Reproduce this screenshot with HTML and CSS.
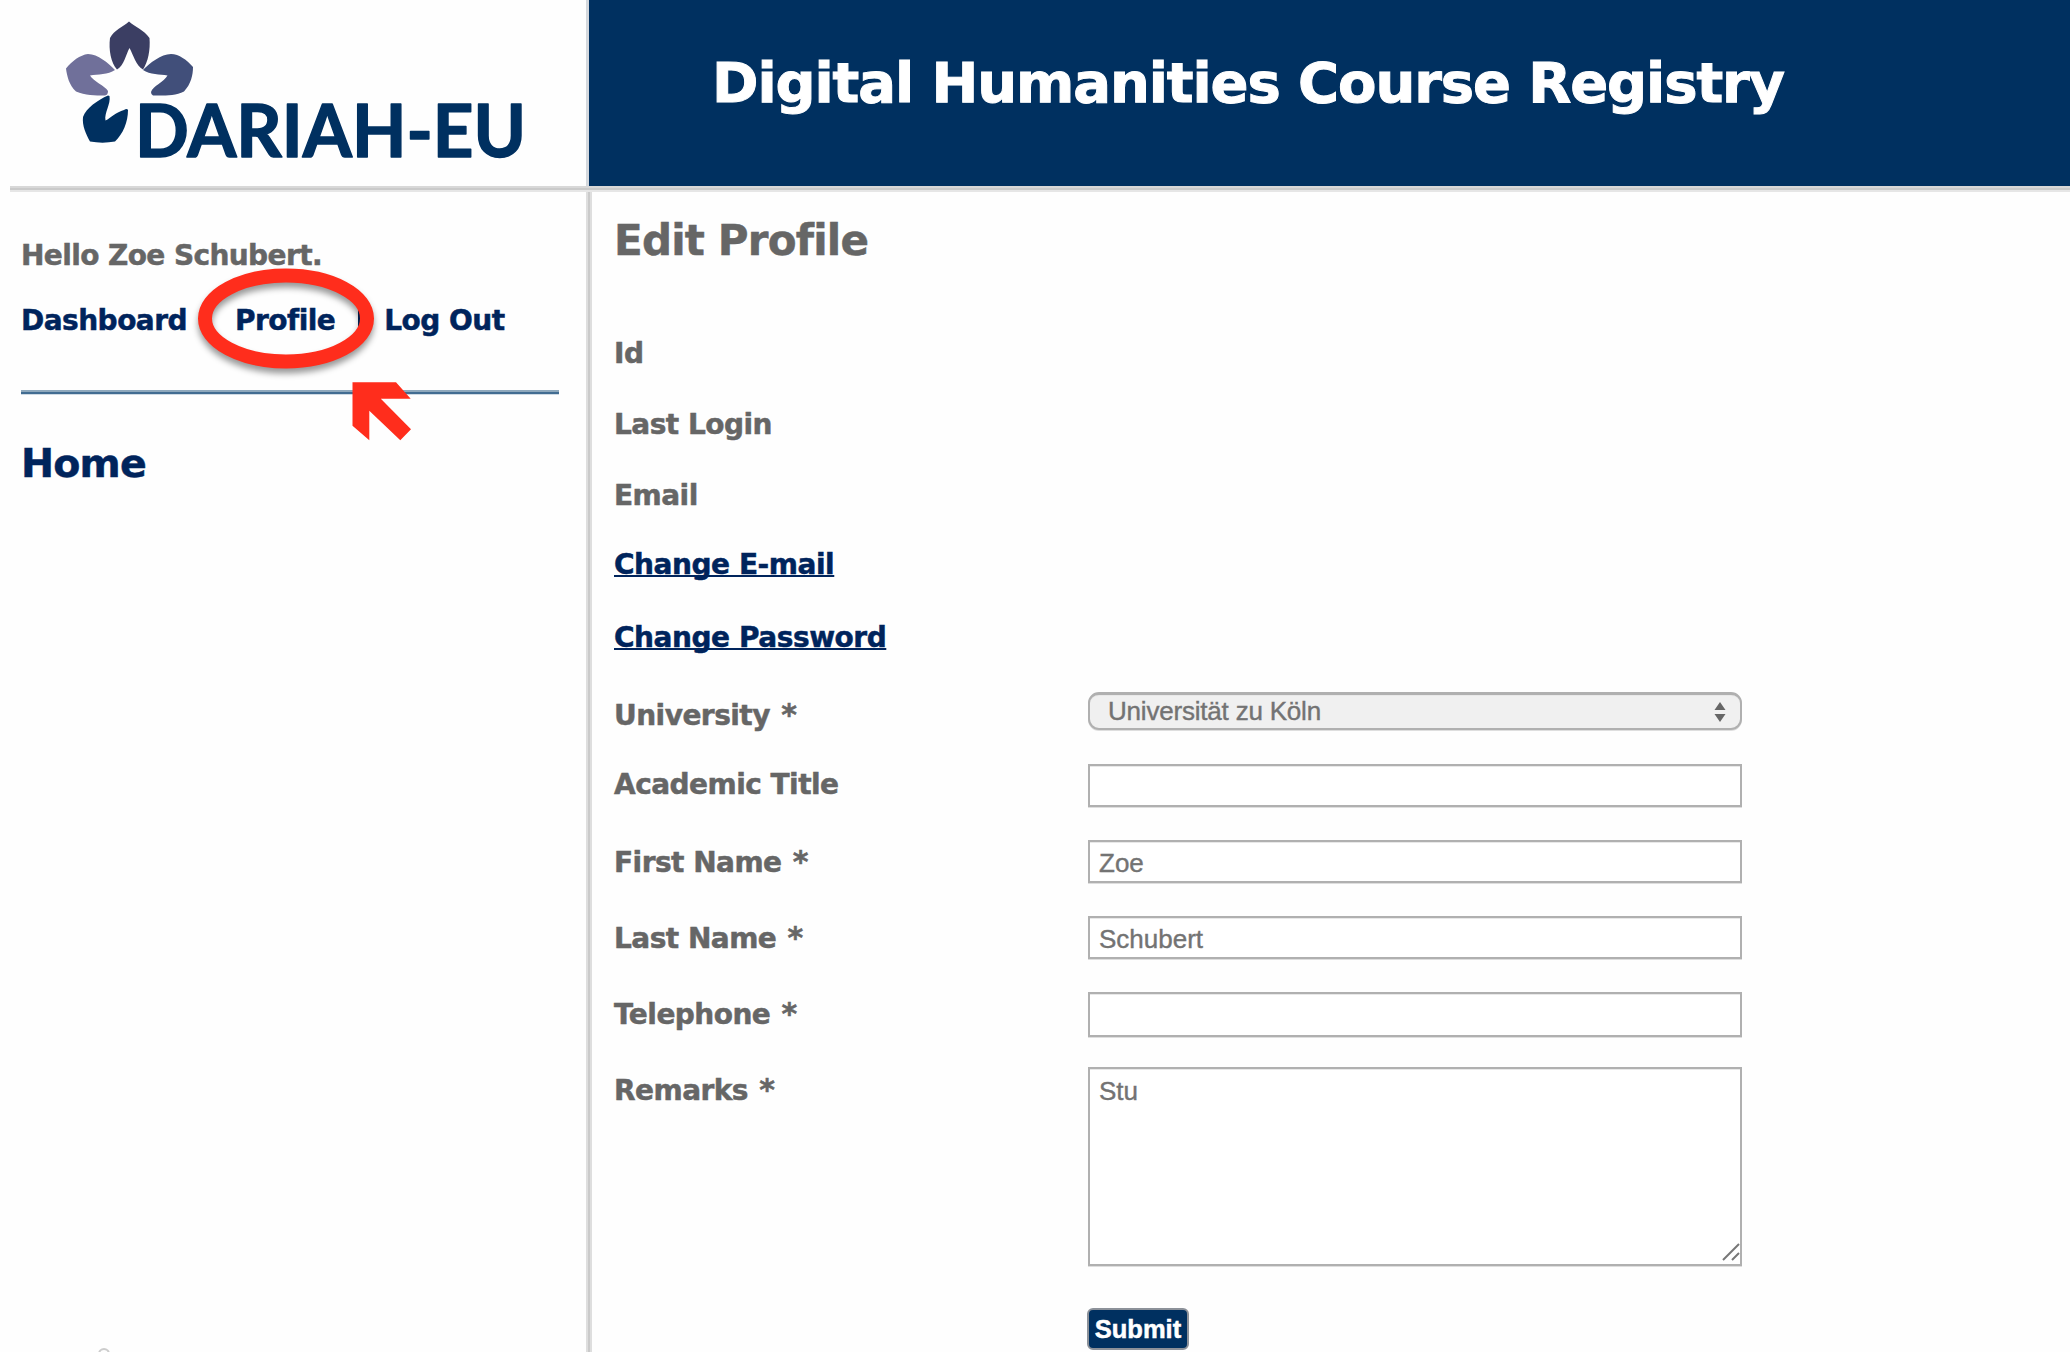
FILE: index.html
```html
<!DOCTYPE html>
<html lang="en">
<head>
<meta charset="utf-8">
<title>Digital Humanities Course Registry</title>
<link rel="stylesheet" href="styles.css">
</head>
<body>
<div class="page">
  <header class="header">
    <a class="brand">
      <svg class="logo" width="586" height="186" viewBox="0 0 586 186" role="img" aria-label="DARIAH-EU">
        <path fill="#3b3e63" d="M129 21.500C135 27 144 30 149.500 38C150.500 50 148 62 143 69.500C136 66 133 54 129.500 48C126 54 124 66 117 69.500C111 63 108.500 50 110 38C114 30 123 27 129 21.500Z"/>
        <path fill="#70709a" d="M66 68.500C72 61 80 55 88 54C98 54 108 63 115 70C108 75 98 74 90 75.500C93 81 105 86 108 91Q108 95 105 95.500C95 95.500 85 95.500 76 91.500C69 85 67 76 66 68.500Z"/>
        <path fill="#414f7a" d="M193 67C187 60 179 54 171 54C161 54 150 63 143 70C150 75 160 74 167.500 75.500C164 82 153 86 151 92Q151 95 153 95.500C164 95.500 175 96 184 91.500C191 84 193 75 193 67Z"/>
        <path fill="#003060" d="M108 95.500C98 100 86 108 83 117C82 126 86 134 90 141.500C98 143 107 143 115 141.500C123 134 128 122 128 110Q127 108 124 110C116 112 111 118 105.500 120.500C104 113 111 104 109.500 96Z"/>
        <text class="logo-text" x="135" y="157" textLength="391" lengthAdjust="spacingAndGlyphs">DARIAH-EU</text>
      </svg>
    </a>
    <div class="banner"><h1 class="site-title">Digital Humanities Course Registry</h1></div>
  </header>
  <div class="columns">
    <aside class="sidebar">
      <p class="greeting">Hello Zoe Schubert.</p>
      <nav class="user-nav">
        <a>Dashboard</a><i class="bar"></i><a>Profile</a><i class="bar"></i><a>Log Out</a>
        <svg class="marker" width="240" height="200" viewBox="190 255 240 200" aria-hidden="true">
          <ellipse class="ring" cx="286" cy="318.500" rx="81" ry="43"/>
          <path fill="#ff2d1c" d="M352.500 382.300H396L410.700 398.700H380.800L411 429.300L400.300 440.300L369.300 410.700V440.300L352.500 425.700Z"/>
        </svg>
      </nav>
      <hr class="divider">
      <a class="home">Home</a>
      <div class="sidebar-foot"><span class="dot"></span></div>
    </aside>
    <main class="content">
      <h2 class="heading">Edit Profile</h2>
      <div class="info">
        <span class="label">Id</span>
        <span class="label">Last Login</span>
        <span class="label">Email</span>
      </div>
      <div class="links">
        <a class="link">Change E-mail</a>
        <a class="link">Change Password</a>
      </div>
      <form class="form">
        <div class="row row-select">
          <label class="label">University <span class="req">*</span></label>
          <div class="control">
            <select class="field select"><option>Universität zu Köln</option></select>
            <svg class="arrows" width="12" height="24" viewBox="0 0 12 24"><path fill="#666" d="M0.500 10L6 2L11.500 10ZM0.500 14H11.500L6 22Z"/></svg>
          </div>
        </div>
        <div class="row row-title"><label class="label">Academic Title</label><input class="field" type="text"></div>
        <div class="row"><label class="label">First Name <span class="req">*</span></label><input class="field" type="text" value="Zoe"></div>
        <div class="row"><label class="label">Last Name <span class="req">*</span></label><input class="field" type="text" value="Schubert"></div>
        <div class="row row-phone"><label class="label">Telephone <span class="req">*</span></label><input class="field" type="text"></div>
        <div class="row row-remarks">
          <label class="label">Remarks <span class="req">*</span></label>
          <div class="control">
            <textarea class="field area">Stu</textarea>
            <svg class="grip" width="18" height="18" viewBox="0 0 18 18"><path stroke="#777" stroke-width="2" fill="none" d="M1 17L17 1M10 17L17 10"/></svg>
          </div>
        </div>
        <div class="row row-submit"><span></span><button class="submit" type="button">Submit</button></div>
      </form>
    </main>
  </div>
</div>
</body>
</html>
```
FILE: styles.css
```css
* { box-sizing: border-box; }
body {
  margin: 0;
  background: #fefefe;
  color: #666;
  font-family: "DejaVu Sans", Verdana, sans-serif;
  font-weight: bold;
  font-size: 28px;
  line-height: 34px;
  letter-spacing: -0.53px;
  -webkit-text-stroke: 0.5px currentColor;
}
h1, h2, p { margin: 0; font-weight: bold; }
.page { height: 1352px; overflow: hidden; display: flex; flex-direction: column; }

.header { display: flex; height: 186px; flex: none; }
.brand { width: 589px; border-right: 3px solid #d4d8dd; flex: none; }
.logo { display: block; }
.logo-text {
  font: 700 72px Lato, sans-serif;
  fill: #003060;
  letter-spacing: 0;
  stroke: #003060;
  stroke-width: 1.5px;
  stroke-linejoin: round;
  -webkit-text-stroke: 0;
  stroke-width: 1.5px;
}
.banner { flex: 1; background: #003060; padding: 49px 0 0 123px; }
.site-title {
  color: #fff;
  font-size: 56px;
  line-height: 68px;
  letter-spacing: -1.1px;
  white-space: nowrap;
  -webkit-text-stroke: 1px #fff;
}

.columns { flex: 1; min-height: 0; display: flex; position: relative; }
.columns::before {
  content: "";
  position: absolute;
  left: 10px; right: 0; top: 0;
  height: 6px;
  background: linear-gradient(#d8d8d8 0 2px, #cacaca 2px 4px, #e6e6e6 4px);
}
.sidebar {
  width: 592px;
  flex: none;
  padding: 53px 33px 0 21px;
  display: flex;
  flex-direction: column;
  background: linear-gradient(90deg, #dedede 0 2px, #cacaca 2px 4px, #dedede 4px) right / 6px 100% no-repeat;
}
.greeting { margin-bottom: 31px; letter-spacing: -0.6px; }
.user-nav { display: flex; align-items: center; position: relative; color: #00245c; white-space: nowrap; }
.bar { width: 2px; height: 25px; background: #00245c; margin: 0 28px 0 18px; }
.bar + a + .bar { margin: 0 24px 0 23px; }
.marker { position: absolute; left: 169px; top: -49px; }
.ring { fill: none; stroke: #ff2d1c; stroke-width: 14px; filter: drop-shadow(0 5px 3px rgba(0, 0, 0, .4)); }
.divider {
  width: 538px;
  height: 5px;
  margin: 52px 0 44px;
  border: 0;
  background: linear-gradient(#8ea8bc 0 2px, #416c91 2px 4px, #cfdae3 4px);
}
.home { font-size: 39.500px; line-height: 48px; color: #00245c; letter-spacing: -0.8px; }
.sidebar-foot { margin-top: auto; height: 4px; padding-left: 77px; }
.dot { display: block; width: 12px; height: 12px; border: 2px solid #ccc; border-radius: 50%; }

.content { flex: 1; padding: 30px 0 0 22px; }
.heading { font-size: 42px; line-height: 50px; letter-spacing: -0.8px; margin-bottom: 71px; }
.info { display: flex; flex-direction: column; gap: 37px; margin-bottom: 35px; }
.links { display: flex; flex-direction: column; align-items: flex-start; gap: 39px; margin-bottom: 37px; }
.link {
  color: #00245c;
  letter-spacing: -0.45px;
  text-decoration: underline;
  text-decoration-thickness: 2px;
  text-underline-offset: 1px;
  text-decoration-skip-ink: none;
}

.row { display: grid; grid-template-columns: 474px 654px; height: 76px; align-items: start; }
.row .label { padding-top: 6px; }
.row-select { height: 72px; }
.row-select .label { padding-top: 7px; }
.row-title .label { padding-top: 4px; }
.row-phone { height: 75px; }
.row-remarks { height: 241px; }
.row-remarks .label { padding-top: 7px; }
.row-submit { height: 43px; }
.req { margin-left: 2px; font-size: 30px; line-height: 0; }
.control { position: relative; }
.field {
  display: block;
  width: 654px;
  height: 43px;
  margin: 0;
  padding: 4px 10px 0 9px;
  border: 2px solid #b0b0b0;
  border-radius: 0;
  outline: 0;
  background: #fff;
  box-shadow: inset 0 1px #e8e8e8, 0 1px #dedede;
  color: #737373;
  font: 26px/30px "Liberation Sans", Arial, sans-serif;
  letter-spacing: 0;
  resize: none;
  -webkit-text-stroke: 0.4px currentColor;
}
.row-phone .field { height: 45px; }
.select {
  height: 38px;
  padding: 0 18px 1px;
  appearance: none;
  border-top-width: 3px;
  border-radius: 11px;
  background: #f0f0f0;
  letter-spacing: -0.2px;
}
.arrows { position: absolute; right: 16px; top: 8px; }
.area { height: 199px; padding-top: 7px; overflow: hidden; }
.grip { position: absolute; right: 2px; top: 176px; }
.submit {
  width: 102px;
  height: 42px;
  margin-left: -1px;
  padding: 0;
  border: 2px solid #8c9199;
  border-radius: 6px;
  background: #003060;
  color: #fff;
  font: bold 25.500px/34px "Liberation Sans", Arial, sans-serif;
}
```
